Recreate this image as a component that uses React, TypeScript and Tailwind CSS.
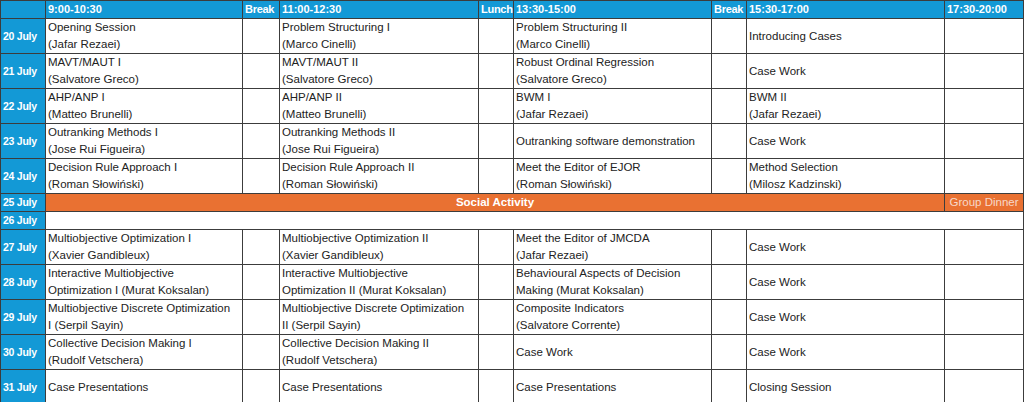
import React from "react";

type Cell = string[];
type Row = { date: string; cells: [Cell, Cell, Cell, Cell] };

const top: Row[] = [
  { date: "20 July", cells: [["Opening Session", "(Jafar Rezaei)"], ["Problem Structuring I", "(Marco Cinelli)"], ["Problem Structuring II", "(Marco Cinelli)"], ["Introducing Cases"]] },
  { date: "21 July", cells: [["MAVT/MAUT I", "(Salvatore Greco)"], ["MAVT/MAUT II", "(Salvatore Greco)"], ["Robust Ordinal Regression", "(Salvatore Greco)"], ["Case Work"]] },
  { date: "22 July", cells: [["AHP/ANP I", "(Matteo Brunelli)"], ["AHP/ANP II", "(Matteo Brunelli)"], ["BWM I", "(Jafar Rezaei)"], ["BWM II", "(Jafar Rezaei)"]] },
  { date: "23 July", cells: [["Outranking Methods I", "(Jose Rui Figueira)"], ["Outranking Methods II", "(Jose Rui Figueira)"], ["Outranking software demonstration"], ["Case Work"]] },
  { date: "24 July", cells: [["Decision Rule Approach I", "(Roman Słowiński)"], ["Decision Rule Approach II", "(Roman Słowiński)"], ["Meet the Editor of EJOR", "(Roman Słowiński)"], ["Method Selection", "(Milosz Kadzinski)"]] },
];

const bottom: Row[] = [
  { date: "27 July", cells: [["Multiobjective Optimization I", "(Xavier Gandibleux)"], ["Multiobjective Optimization II", "(Xavier Gandibleux)"], ["Meet the Editor of JMCDA", "(Jafar Rezaei)"], ["Case Work"]] },
  { date: "28 July", cells: [["Interactive Multiobjective", "Optimization I (Murat Koksalan)"], ["Interactive Multiobjective", "Optimization II (Murat Koksalan)"], ["Behavioural Aspects of Decision", "Making (Murat Koksalan)"], ["Case Work"]] },
  { date: "29 July", cells: [["Multiobjective Discrete Optimization", "I (Serpil Sayin)"], ["Multiobjective Discrete Optimization", "II (Serpil Sayin)"], ["Composite Indicators", "(Salvatore Corrente)"], ["Case Work"]] },
  { date: "30 July", cells: [["Collective Decision Making I", "(Rudolf Vetschera)"], ["Collective Decision Making II", "(Rudolf Vetschera)"], ["Case Work"], ["Case Work"]] },
  { date: "31 July", cells: [["Case Presentations"], ["Case Presentations"], ["Case Presentations"], ["Closing Session"]] },
];

const bd = "border border-[#3c3c3c]";
const blue = "bg-[#1399d6]";
const orange = "bg-[#e97132]";

function DateCell({ date }: { date: string }) {
  return (
    <td className={`${bd} ${blue} px-[2px] py-0 text-left align-middle text-[10.5px] font-bold tracking-tight text-white whitespace-nowrap overflow-hidden`}>{date}</td>
  );
}

function TextCell({ lines }: { lines: Cell }) {
  return (
    <td className={`${bd} bg-white px-[2px] py-0 align-middle text-[#222]`}>
      <div className="flex flex-col overflow-hidden">
        {lines.map((l, i) => (
          <span key={i} className="whitespace-nowrap leading-[17px]">{l}</span>
        ))}
      </div>
    </td>
  );
}

function EmptyCell() {
  return <td className={`${bd} bg-white`} />;
}

function DataRow({ row }: { row: Row }) {
  return (
    <tr className="h-[35px]">
      <DateCell date={row.date} />
      <TextCell lines={row.cells[0]} />
      <EmptyCell />
      <TextCell lines={row.cells[1]} />
      <EmptyCell />
      <TextCell lines={row.cells[2]} />
      <EmptyCell />
      <TextCell lines={row.cells[3]} />
      <EmptyCell />
    </tr>
  );
}

export default function App() {
  const headers = ["9:00-10:30", "Break", "11:00-12:30", "Lunch", "13:30-15:00", "Break", "15:30-17:00", "17:30-20:00"];
  return (
    <div className="w-[1024px] h-[402px] bg-white overflow-hidden" style={{ fontFamily: '"Liberation Sans", Arial, sans-serif' }}>
      <table className="table-fixed border-collapse w-[1023px] text-[11.5px] leading-[17px]">
        <colgroup>
          <col className="w-[45px]" />
          <col className="w-[197px]" />
          <col className="w-[37px]" />
          <col className="w-[199px]" />
          <col className="w-[35px]" />
          <col className="w-[198px]" />
          <col className="w-[35px]" />
          <col className="w-[198px]" />
          <col className="w-[79px]" />
        </colgroup>
        <tbody>
          <tr className="h-[17px]">
            <td className={`${bd} ${blue}`} />
            {headers.map((h, i) => (
              <td
                key={i}
                className={`${bd} ${blue} px-[2px] py-0 text-[11px] font-bold text-white whitespace-nowrap overflow-hidden ${h === "Break" || h === "Lunch" ? "tracking-tight" : ""}`}
              >
                {h}
              </td>
            ))}
          </tr>
          {top.map((r) => (
            <DataRow key={r.date} row={r} />
          ))}
          <tr className="h-[17px]">
            <DateCell date="25 July" />
            <td colSpan={7} className={`${bd} ${orange} py-0 text-center font-bold text-white`}>Social Activity</td>
            <td className={`${bd} ${orange} px-[2px] py-0 text-center text-[#f7d9c9] whitespace-nowrap overflow-hidden`}>Group Dinner</td>
          </tr>
          <tr className="h-[17px]">
            <DateCell date="26 July" />
            <td colSpan={8} className={`${bd} bg-white py-0`} />
          </tr>
          {bottom.map((r) => (
            <DataRow key={r.date} row={r} />
          ))}
        </tbody>
      </table>
    </div>
  );
}
